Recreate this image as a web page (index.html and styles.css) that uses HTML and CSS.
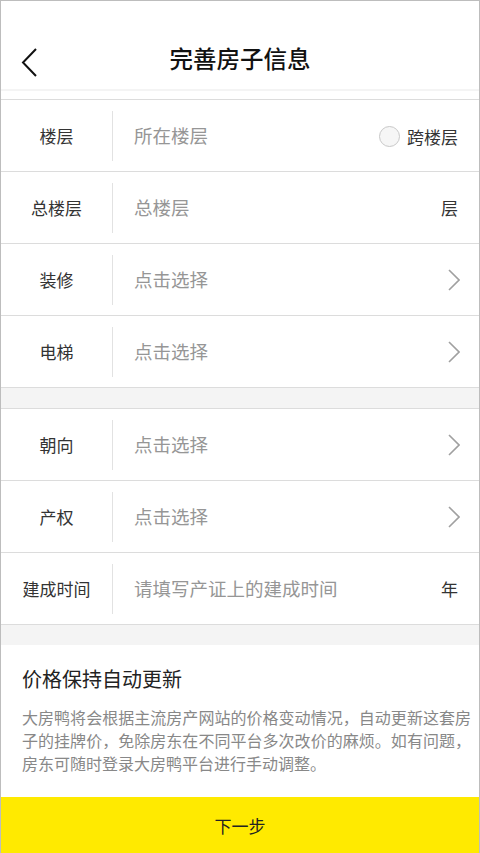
FILE: index.html
```html
<!doctype html>
<html lang="zh-CN">
<head>
    <meta charset="UTF-8">
    <meta name="viewport" content="width=device-width, initial-scale=1.0">
    <title>完善房子信息</title>
    <link rel="stylesheet" href="styles.css">
</head>
<body>
<div class="screen">
    <header class="topbar">
        <svg class="back" width="20" height="32" viewBox="0 0 20 32">
            <path d="M15 2 L2 15.5 L15 29" fill="none" stroke="#111" stroke-width="2"/>
        </svg>
        <h1>完善房子信息</h1>
    </header>
    <div class="topgap"></div>

    <section class="group">
        <div class="row">
            <div class="label">楼层</div>
            <div class="value placeholder">所在楼层</div>
            <div class="extra">
                <span class="radio"></span>跨楼层
            </div>
        </div>
        <div class="row">
            <div class="label">总楼层</div>
            <div class="value placeholder">总楼层</div>
            <div class="unit">层</div>
        </div>
        <div class="row">
            <div class="label">装修</div>
            <div class="value placeholder">点击选择</div>
            <svg class="arrow" width="12" height="22" viewBox="0 0 12 22"><path d="M1 1 L11 11 L1 21" fill="none" stroke="#a0a0a0" stroke-width="1.6"/></svg>
        </div>
        <div class="row">
            <div class="label">电梯</div>
            <div class="value placeholder">点击选择</div>
            <svg class="arrow" width="12" height="22" viewBox="0 0 12 22"><path d="M1 1 L11 11 L1 21" fill="none" stroke="#a0a0a0" stroke-width="1.6"/></svg>
        </div>
    </section>

    <section class="group">
        <div class="row">
            <div class="label">朝向</div>
            <div class="value placeholder">点击选择</div>
            <svg class="arrow" width="12" height="22" viewBox="0 0 12 22"><path d="M1 1 L11 11 L1 21" fill="none" stroke="#a0a0a0" stroke-width="1.6"/></svg>
        </div>
        <div class="row">
            <div class="label">产权</div>
            <div class="value placeholder">点击选择</div>
            <svg class="arrow" width="12" height="22" viewBox="0 0 12 22"><path d="M1 1 L11 11 L1 21" fill="none" stroke="#a0a0a0" stroke-width="1.6"/></svg>
        </div>
        <div class="row">
            <div class="label">建成时间</div>
            <div class="value placeholder">请填写产证上的建成时间</div>
            <div class="unit">年</div>
        </div>
    </section>

    <section class="info">
        <h2>价格保持自动更新</h2>
        <p>大房鸭将会根据主流房产网站的价格变动情况，自动更新这套房子的挂牌价，免除房东在不同平台多次改价的麻烦。如有问题，房东可随时登录大房鸭平台进行手动调整。</p>
    </section>

    <div class="spacer"></div>
    <button class="next">下一步</button>
</div>
</body>
</html>
```

FILE: styles.css
```css
body {
    margin: 0;
    font-family: "Noto Sans CJK SC", "Noto Sans", sans-serif;
    background: #fff;
}

.screen {
    width: 480px;
    height: 853px;
    box-sizing: border-box;
    border: 1px solid #bdbdbd;
    border-bottom: none;
    display: flex;
    flex-direction: column;
    background: #f4f4f4;
    overflow: hidden;
}

.topbar {
    height: 87px;
    flex-shrink: 0;
    background: #fff;
    display: flex;
    align-items: center;
    justify-content: center;
    position: relative;
    padding-top: 1px;
    border-bottom: 2px solid #f4f4f4;
}

.topbar h1 {
    margin: 25px 0 0;
    font-size: 23.5px;
    font-weight: 500;
    color: #111;
}

.back {
    position: absolute;
    left: 20px;
    top: 46px;
}

.topgap {
    height: 8px;
    flex-shrink: 0;
    background: #fff;
}

.group {
    background: #fff;
    border-top: 1px solid #dcdcdc;
    margin-bottom: 20px;
    flex-shrink: 0;
}

.row {
    height: 71px;
    display: flex;
    align-items: center;
    border-bottom: 1px solid #dcdcdc;
    padding-right: 21px;
}

.label {
    width: 111px;
    height: 50px;
    line-height: 50px;
    flex-shrink: 0;
    text-align: center;
    font-size: 17px;
    color: #333;
    border-right: 1px solid #e2e2e2;
}

.value {
    flex: 1;
    padding-left: 21px;
    font-size: 18.5px;
    margin-top: -2px;
}

.placeholder {
    color: #969696;
}

.extra {
    display: flex;
    align-items: center;
    font-size: 17px;
    color: #333;
    gap: 7px;
    margin-top: 2px;
}

.radio {
    width: 19px;
    height: 19px;
    border-radius: 50%;
    border: 1px solid #c8c8c8;
    background: #f6f6f6;
}

.unit {
    font-size: 17px;
    color: #333;
}

.arrow {
    margin-right: -2px;
}

.info {
    background: #fff;
    padding: 19px 8px 22px 21px;
    flex-shrink: 0;
}

.info h2 {
    margin: 0 0 13px;
    font-size: 20px;
    font-weight: 400;
    color: #222;
}

.info p {
    margin: 0;
    font-size: 16px;
    line-height: 23px;
    color: #888;
    text-align: justify;
}

.spacer {
    flex: 1;
}

.next {
    height: 56px;
    flex-shrink: 0;
    border: none;
    background: #ffea00;
    font-family: inherit;
    font-size: 17px;
    color: #222;
    padding: 0;
}
```
